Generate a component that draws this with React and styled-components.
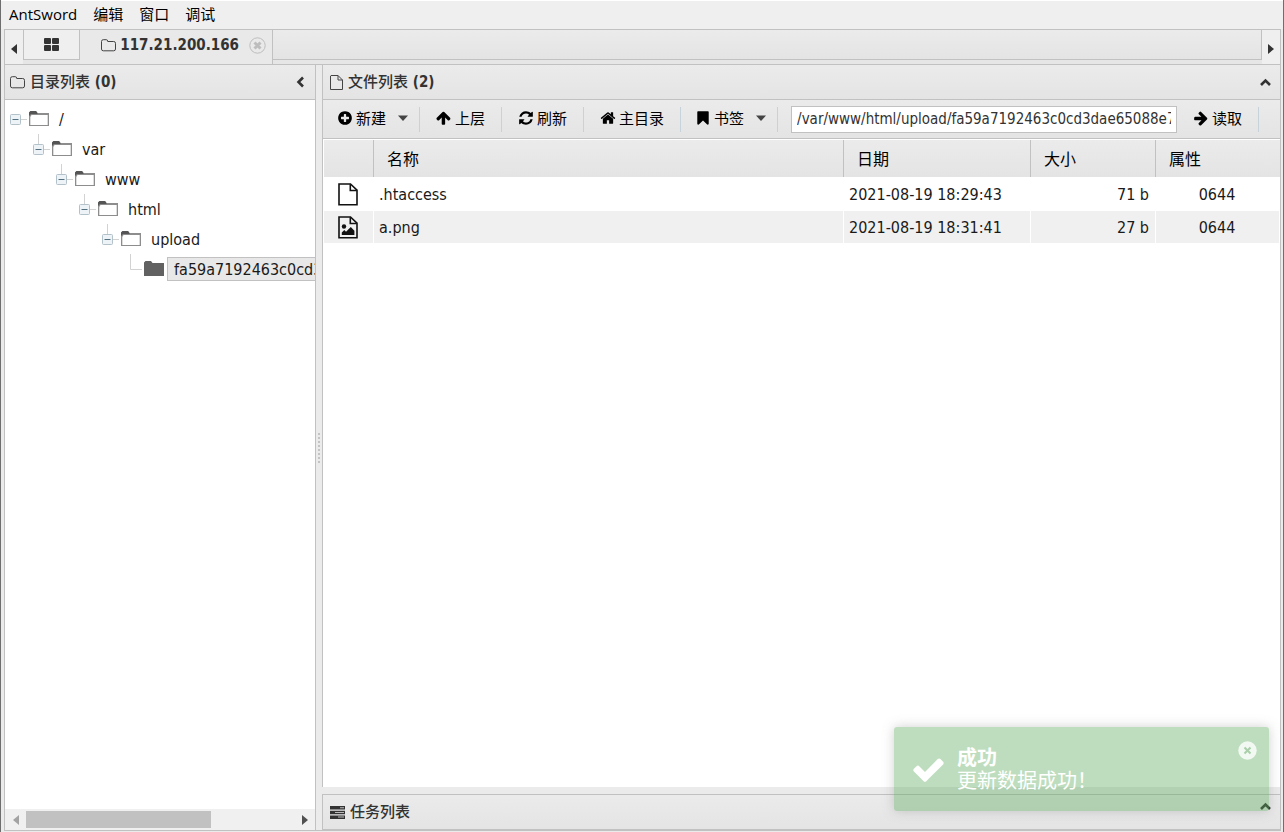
import React, { useState } from 'react'
import styled, { createGlobalStyle } from 'styled-components'

const COLOR = {
  line: '#c1c1c1',
  chrome: '#ebebeb',
  text: '#333333',
  black: '#000000',
  divider: '#c6d3da',
}
const BAR = 'linear-gradient(#ebebeb, #e4e4e4)'
const FONT = {
  ui: '"DejaVu Sans Condensed", "DejaVu Sans", "Noto Sans CJK SC", sans-serif',
  menu: '"Open Sans", "Noto Sans CJK SC", sans-serif',
  cjk: '"Noto Sans CJK SC", sans-serif',
}

const GlobalStyle = createGlobalStyle`
  * {
    box-sizing: border-box;
  }
  body {
    margin: 0;
    font-family: ${FONT.ui};
    font-size: 16px;
    color: ${COLOR.black};
  }
  button {
    font: inherit;
    color: inherit;
    background: none;
    border: 0;
    padding: 0;
  }
  svg {
    display: block;
    flex: none;
  }
`

const Window = styled.div`
  height: 100vh;
  display: flex;
  flex-direction: column;
  overflow: hidden;
  background: ${COLOR.chrome};
  border-left: 1px solid #6e6e6e;
  border-right: 1px solid #6e6e6e;
`
const MenuBar = styled.nav`
  height: 29px;
  flex: none;
  display: flex;
  align-items: center;
  gap: 16px;
  padding: 0 0 2px 8px;
  background: #efefef;
  border-top: 1px solid #ffffff;
  font-family: ${FONT.menu};
  font-size: 15px;
  line-height: 20px;
`
const Workspace = styled.div`
  flex: 1;
  min-height: 0;
  display: flex;
  flex-direction: column;
  margin: 0 2px 1px 3px;
  border: 1px solid ${COLOR.line};
`
const TabBar = styled.div`
  height: 34px;
  flex: none;
  display: flex;
  background: #e6e6e6;
`
const TabArrow = styled.button`
  width: 18px;
  display: flex;
  align-items: center;
  justify-content: center;
  padding-top: 3px;
  background: #efefef;
`
const Tab = styled.button`
  height: ${(props) => (props.$active ? '34px' : '30px')};
  width: ${(props) => (props.$active ? '193px' : '57px')};
  display: flex;
  align-items: center;
  justify-content: ${(props) => (props.$active ? 'flex-end' : 'center')};
  background: ${(props) => (props.$active ? '#e9e9e9' : '#efefef')};
  border: 1px solid ${COLOR.line};
  border-width: 0 1px ${(props) => (props.$active ? '0' : '1px')} ${(props) => (props.$active ? '0' : '1px')};
  color: ${COLOR.text};
  font-size: 15px;
  font-weight: bold;
  padding: ${(props) => (props.$active ? '0 6px 4px 0' : '0')};
`
const TabTitle = styled.span`
  margin: 0 10px 0 4px;
`
const TabSpace = styled.div`
  flex: 1;
  height: 30px;
  background: ${BAR};
  border-right: 1px solid ${COLOR.line};
  border-bottom: 1px solid ${COLOR.line};
`
const Columns = styled.div`
  flex: 1;
  min-height: 0;
  display: flex;
  border-top: 1px solid ${COLOR.line};
`
const SidePanel = styled.aside`
  width: 311px;
  flex: none;
  display: flex;
  flex-direction: column;
  background: #ffffff;
  border-right: 1px solid ${COLOR.line};
`
const Splitter = styled.div`
  width: 6px;
  flex: none;
  display: flex;
  align-items: center;
  justify-content: center;
`
const MainPanel = styled.main`
  flex: 1;
  min-width: 0;
  display: flex;
  flex-direction: column;
`
const PanelHeader = styled.header`
  height: 35px;
  flex: none;
  display: flex;
  align-items: center;
  gap: 5px;
  padding: ${(props) => (props.$side ? '0 10px 0 5px' : '0 8px 0 7px')};
  background: ${BAR};
  border-bottom: 1px solid ${COLOR.line};
  color: ${COLOR.text};
`
const PanelTitle = styled.h2`
  flex: 1;
  margin: 0;
  padding-bottom: 2px;
  font-size: 15px;
  line-height: 22px;
  font-weight: bold;
`
const Cjk = styled.span`
  font-family: ${FONT.cjk};
  font-weight: 500;
`
const CollapseButton = styled.button`
  padding-bottom: ${(props) => (props.$raised ? '12px' : '0')};
`
const Tree = styled.ul`
  flex: 1;
  min-height: 0;
  overflow: hidden;
  margin: 0;
  padding: 4px 0;
  list-style: none;
`
const TreeRow = styled.li`
  height: 30px;
  display: flex;
  align-items: center;
  padding-left: ${(props) => props.$level * 23}px;
`
const TreeLabel = styled.span`
  flex: none;
  margin-left: 3px;
  padding: 2px 6px 0;
  line-height: 20px;
  border: 1px solid ${(props) => (props.$selected ? COLOR.line : 'transparent')};
  background: ${(props) => (props.$selected ? '#e8e8e8' : 'none')};
  color: #1a1a1a;
`
const ScrollBar = styled.div`
  height: 21px;
  flex: none;
  display: flex;
  align-items: center;
  background: #f0f0f0;
`
const ScrollArrow = styled.button`
  width: 21px;
  height: 21px;
  display: flex;
  align-items: center;
  justify-content: center;
`
const ScrollTrack = styled.div`
  flex: 1;
  height: 17px;
`
const ScrollThumb = styled.div`
  width: 69%;
  height: 17px;
  background: #c1c1c1;
`
const Files = styled.section`
  flex: 1;
  min-height: 0;
  display: flex;
  flex-direction: column;
  background: #ffffff;
  border-left: 1px solid ${COLOR.line};
`
const Toolbar = styled.div`
  height: 39px;
  flex: none;
  display: flex;
  align-items: center;
  padding-right: 21px;
  background: ${BAR};
  border-bottom: 1px solid ${COLOR.line};
  font-family: ${FONT.cjk};
  font-size: 15px;
  line-height: 22px;
`
const ToolItem = styled.div`
  height: 25px;
  display: flex;
  align-items: center;
  padding: ${(props) => (props.$menu ? '0 11px 3px 14px' : '0 16px 3px')};
  border-right: 1px solid ${COLOR.divider};
`
const ToolButton = styled.button`
  display: flex;
  align-items: center;
  gap: 3px;
  white-space: nowrap;
`
const DropButton = styled.button`
  height: 22px;
  margin-left: 12px;
  display: flex;
  align-items: center;
`
const PathField = styled.input`
  flex: 1;
  min-width: 0;
  height: 27px;
  margin-left: 13px;
  padding: 0 5px;
  border: 1px solid ${COLOR.line};
  border-radius: 0;
  outline: none;
  background: #ffffff;
  color: ${COLOR.text};
  font-family: ${FONT.ui};
  font-size: 15px;
`
const FileTable = styled.table`
  width: 100%;
  table-layout: fixed;
  border-collapse: separate;
  border-spacing: 0;
  border-left: 1px solid #ffffff;
  border-top: 1px solid #ffffff;
`
const HeadCell = styled.th`
  width: ${(props) => props.$width};
  height: 37px;
  padding: 0 0 2px 13px;
  text-align: left;
  font-family: ${FONT.cjk};
  font-size: 16px;
  font-weight: normal;
  line-height: 24px;
  background: ${BAR};
  border-right: 1px solid ${COLOR.line};
  &:last-child {
    border-right: 0;
  }
`
const FileRow = styled.tr`
  height: 33px;
  &:nth-child(even) td {
    background: #f0f0f0;
  }
`
const Cell = styled.td`
  padding: ${(props) => (props.$icon ? '0 0 0 14px' : '0 6px 0 5px')};
  text-align: ${(props) => props.$align || 'left'};
  color: #1a1a1a;
  white-space: nowrap;
  border-right: 1px solid #ffffff;
  border-top: 1px solid #ffffff;
`
const TaskHeader = styled(PanelHeader)`
  height: 36px;
  margin-top: 7px;
  border: 1px solid ${COLOR.line};
  border-right: 0;
`
const Toast = styled.div`
  position: absolute;
  right: 15px;
  bottom: 21px;
  width: 375px;
  height: 84px;
  display: flex;
  align-items: center;
  padding: 0 12px 0 17px;
  gap: 11px;
  border-radius: 3px;
  background: rgba(92, 170, 92, 0.4);
  box-shadow: 0 0 12px rgba(120, 120, 120, 0.35);
  color: #ffffff;
  font-family: ${FONT.cjk};
  font-size: 20px;
  line-height: 23px;
`
const ToastText = styled.div`
  flex: 1;
  padding-bottom: 2px;
`
const ToastTitle = styled.strong`
  display: block;
  font-weight: bold;
`
const ToastClose = styled.button`
  align-self: flex-start;
  margin-top: 14px;
`

const glyphs = {
  plus: 'M1344 960v-128q0-26-19-45t-45-19h-256v-256q0-26-19-45t-45-19h-128q-26 0-45 19t-19 45v256h-256q-26 0-45 19t-19 45v128q0 26 19 45t45 19h256v256q0 26 19 45t45 19h128q26 0 45-19t19-45v-256h256q26 0 45-19t19-45zm320-64q0 209-103 385.500t-279.500 279.500-385.500 103-385.500-103-279.500-279.500-103-385.500 103-385.500 279.500-279.500 385.500-103 385.500 103 279.500 279.500 103 385.500z',
  up: 'M1611 971q0 51-37 90l-75 75q-38 38-91 38-54 0-90-38l-294-293v704q0 52-37.500 84.500t-90.500 32.500h-128q-53 0-90.500-32.500t-37.500-84.500v-704l-294 293q-36 38-90 38t-90-38l-75-75q-38-38-38-90 0-53 38-91l651-651q35-37 90-37 54 0 91 37l651 651q37 39 37 91z',
  right: 'M1600 960q0 54-37 91l-651 651q-39 37-91 37-51 0-90-37l-75-75q-38-38-38-91t38-91l293-293h-704q-52 0-84.500-37.500t-32.500-90.500v-128q0-53 32.500-90.500t84.500-37.500h704l-293-294q-38-36-38-90t38-90l75-75q38-38 90-38 53 0 91 38l651 651q37 35 37 90z',
  home: 'M1472 992v480q0 26-19 45t-45 19h-384v-384h-256v384h-384q-26 0-45-19t-19-45v-480q0-1 .5-3t.5-3l575-474 575 474q1 2 1 6zm223-69l-62 74q-8 9-21 11h-3q-13 0-21-7l-692-577-692 577q-12 8-24 7-13-2-21-11l-62-74q-8-10-7-23.500t11-21.500l719-599q32-26 76-26t76 26l244 204v-195q0-14 9-23t23-9h192q14 0 23 9t9 23v408l219 182q10 8 11 21.500t-7 23.500z',
  bookmark: 'M1420 128q23 0 44 9 33 13 52.500 41t19.500 62v1289q0 34-19.500 62t-52.500 41q-19 8-44 8-48 0-83-32l-441-424-441 424q-36 33-83 33-23 0-44-9-33-13-52.500-41t-19.500-62v-1289q0-34 19.500-62t52.500-41q21-9 44-9h1048z',
  refresh: 'M1639 1056q0 5-1 7-64 268-268 434.500t-478 166.500q-146 0-282.500-55t-243.500-157l-129 129q-19 19-45 19t-45-19-19-45v-448q0-26 19-45t45-19h448q26 0 45 19t19 45-19 45l-137 137q71 66 161 102t187 36q134 0 250-65t186-179q11-17 53-117 8-23 30-23h192q13 0 22.500 9.500t9.500 22.500zm25-800v448q0 26-19 45t-45 19h-448q-26 0-45-19t-19-45 19-45l138-138q-148-137-349-137-134 0-250 65t-186 179q-11 17-53 117-8 23-30 23h-199q-13 0-22.500-9.500t-9.500-22.500v-7q65-268 270-434.500t480-166.500q146 0 284 55.500t245 156.500l130-129q19-19 45-19t45 19 19 45z',
  check: 'M1671 566q0 40-28 68l-724 724-136 136q-28 28-68 28t-68-28l-136-136-362-362q-28-28-28-68t28-68l136-136q28-28 68-28t68 28l294 295 656-657q28-28 68-28t68 28l136 136q28 28 28 68z',
}
const Glyph = ({ name, size = 16 }) => (
  <svg width={size} height={size} viewBox='0 0 1792 1792' fill='currentColor'>
    <path d={glyphs[name]} />
  </svg>
)
const FolderOutline = () => (
  <svg width='15' height='13' viewBox='0 0 15 13' fill='none' stroke='#444'>
    <path d='M.5 10V2.500a1.800 1.800 0 0 1 1.800-1.800h2.900a1.500 1.500 0 0 1 1.500 1.500v.3h6a1.800 1.800 0 0 1 1.800 1.800V10a1.800 1.800 0 0 1-1.800 1.800H2.300A1.800 1.800 0 0 1 .5 10z' />
  </svg>
)
const PageOutline = () => (
  <svg width='13' height='15' viewBox='0 0 13 15' fill='none' stroke='#444'>
    <path d='M1 .5h7l4.500 4.500v9.500H.5V1zM8 .5V5h4.500' />
  </svg>
)
const FileIcon = ({ image }) => (
  <svg width='20' height='23' viewBox='0 0 20 23' fill='none' stroke='#111' strokeWidth='1.600'>
    <path d='M1 1H12.500L19 7.200V21.800H1z' />
    <path d='M12.300 1.300V7.500h6.400' />
    {image && (
      <g fill='#111' stroke='none'>
        <circle cx='6' cy='10.500' r='2.200' />
        <path d='M3.800 19v-2.400l2.500-2.500 1.700 1.700 4.800-4.800 3.600 3.800V19z' />
      </g>
    )}
  </svg>
)
const Chevron = ({ left }) => (
  <svg width={left ? 9 : 13} height={left ? 12 : 9} viewBox={left ? '0 0 9 12' : '0 0 13 9'} fill='none' stroke='#333' strokeWidth='2.600'>
    <path d={left ? 'M7 1.500L2.500 6 7 10.500' : 'M2 7l4.500-4.500L11 7'} />
  </svg>
)
const Caret = () => (
  <svg width='10' height='6' viewBox='0 0 10 6' fill='#444'>
    <path d='M0 .5h10L5 6z' />
  </svg>
)
const Triangle = ({ right, color = '#333' }) => (
  <svg width='6' height='10' viewBox='0 0 6 10' fill={color}>
    <path d={right ? 'M0 0l6 5-6 5z' : 'M6 0L0 5l6 5z'} />
  </svg>
)
const GridIcon = () => (
  <svg width='15' height='13' viewBox='0 0 15 13' fill='#333'>
    <rect width='7' height='6' rx='1' />
    <rect x='8' width='7' height='6' rx='1' />
    <rect y='7' width='7' height='6' rx='1' />
    <rect x='8' y='7' width='7' height='6' rx='1' />
  </svg>
)
const TabClose = () => (
  <svg width='17' height='17' viewBox='0 0 17 17' fill='none' stroke='#bdbdbd'>
    <circle cx='8.500' cy='8.500' r='7.700' />
    <path d='M5.500 5.500l6 6M11.500 5.500l-6 6' strokeWidth='3' />
  </svg>
)
const TasksIcon = () => (
  <svg width='15' height='13' viewBox='0 0 15 13'>
    <path d='M0 0h15v3.500H0zM0 4.700h15v3.500H0zM0 9.400h15v3.500H0z' fill='#333' />
    <path d='M10 1.200h4v1h-4zM5 5.900h9v1H5zM8 10.600h6v1H8z' fill='#bbb' />
  </svg>
)
const Branch = ({ root, leaf }) => (
  <svg width='24' height='30' viewBox='0 0 24 30' fill='none' stroke='#d2d2d2'>
    {leaf ? (
      <path d='M10.500 0v15.500H22' />
    ) : (
      <>
        <path d={root ? 'M16 15.500h6' : 'M10.500 0v10M16 15.500h6'} />
        <rect x='5.500' y='10.500' width='10' height='10' rx='1' fill='#edf3f6' stroke='#b3c1c9' />
        <path d='M7.500 15.500h6' stroke='#52707f' />
      </>
    )}
  </svg>
)
const TreeFolder = ({ full }) => (
  <svg width='20' height='16' viewBox='0 0 20 16'>
    <path d='M0 15V1.500L1.500 0H7l1.500 2H20v13z' fill={full ? '#616161' : '#8d8d8d'} />
    {!full && <path d='M1.300 14V6L2.500 4h16.200v10z' fill='#fff' />}
    {!full && <path d='M0 5V1.500L1.500 0H7l1.500 2v1H2z' fill='#555' />}
  </svg>
)
const Grip = () => (
  <svg width='2' height='30' viewBox='0 0 2 30' fill='#c4c4c4'>
    {[0, 4, 8, 12, 16, 20, 24, 28].map((y) => (
      <rect key={y} y={y} width='2' height='2' />
    ))}
  </svg>
)
const ToastCross = () => (
  <svg width='19' height='19' viewBox='0 0 19 19'>
    <circle cx='9.500' cy='9.500' r='9.200' fill='#fff' fillOpacity='.8' />
    <path d='M6.500 6.500l6 6M12.500 6.500l-6 6' stroke='#a9d0a9' strokeWidth='2' />
  </svg>
)

const menus = ['AntSword', '编辑', '窗口', '调试']
const folders = ['/', 'var', 'www', 'html', 'upload', 'fa59a7192463c0cd3dae65088e76']
const tools = [
  { label: '新建', icon: 'plus', menu: true },
  { label: '上层', icon: 'up' },
  { label: '刷新', icon: 'refresh' },
  { label: '主目录', icon: 'home' },
  { label: '书签', icon: 'bookmark', menu: true },
]
const files = [
  { name: '.htaccess', date: '2021-08-19 18:29:43', size: '71 b', attr: '0644' },
  { name: 'a.png', date: '2021-08-19 18:31:41', size: '27 b', attr: '0644', image: true },
]

const App = () => {
  const [path, setPath] = useState('/var/www/html/upload/fa59a7192463c0cd3dae65088e76')
  const [showToast, setShowToast] = useState(true)

  return (
    <Window>
      <GlobalStyle />
      <MenuBar>
        {menus.map((menu) => (
          <button key={menu}>{menu}</button>
        ))}
      </MenuBar>
      <Workspace>
        <TabBar>
          <TabArrow aria-label='left'>
            <Triangle />
          </TabArrow>
          <Tab aria-label='home'>
            <GridIcon />
          </Tab>
          <Tab $active>
            <FolderOutline />
            <TabTitle>117.21.200.166</TabTitle>
            <TabClose />
          </Tab>
          <TabSpace />
          <TabArrow aria-label='right'>
            <Triangle right />
          </TabArrow>
        </TabBar>
        <Columns>
          <SidePanel>
            <PanelHeader $side>
              <FolderOutline />
              <PanelTitle>
                <Cjk>目录列表</Cjk> (0)
              </PanelTitle>
              <CollapseButton aria-label='collapse'>
                <Chevron left />
              </CollapseButton>
            </PanelHeader>
            <Tree>
              {folders.map((name, level) => {
                const leaf = level === folders.length - 1
                return (
                  <TreeRow key={name} $level={level}>
                    <Branch root={level === 0} leaf={leaf} />
                    <TreeFolder full={leaf} />
                    <TreeLabel $selected={leaf}>{name}</TreeLabel>
                  </TreeRow>
                )
              })}
            </Tree>
            <ScrollBar>
              <ScrollArrow aria-label='scroll left'>
                <Triangle color='#a3a3a3' />
              </ScrollArrow>
              <ScrollTrack>
                <ScrollThumb />
              </ScrollTrack>
              <ScrollArrow aria-label='scroll right'>
                <Triangle right color='#505050' />
              </ScrollArrow>
            </ScrollBar>
          </SidePanel>
          <Splitter>
            <Grip />
          </Splitter>
          <MainPanel>
            <Files>
              <PanelHeader>
                <PageOutline />
                <PanelTitle>
                  <Cjk>文件列表</Cjk> (2)
                </PanelTitle>
                <CollapseButton aria-label='collapse'>
                  <Chevron />
                </CollapseButton>
              </PanelHeader>
              <Toolbar>
                {tools.map((tool) => (
                  <ToolItem key={tool.label} $menu={tool.menu}>
                    <ToolButton>
                      <Glyph name={tool.icon} />
                      {tool.label}
                    </ToolButton>
                    {tool.menu && (
                      <DropButton aria-label={tool.label}>
                        <Caret />
                      </DropButton>
                    )}
                  </ToolItem>
                ))}
                <PathField aria-label='path' value={path} onChange={(e) => setPath(e.target.value)} />
                <ToolItem>
                  <ToolButton>
                    <Glyph name='right' />
                    读取
                  </ToolButton>
                </ToolItem>
              </Toolbar>
              <FileTable>
                <thead>
                  <tr>
                    <HeadCell $width='50px' />
                    <HeadCell>名称</HeadCell>
                    <HeadCell $width='187px'>日期</HeadCell>
                    <HeadCell $width='125px'>大小</HeadCell>
                    <HeadCell $width='124px'>属性</HeadCell>
                  </tr>
                </thead>
                <tbody>
                  {files.map((file) => (
                    <FileRow key={file.name}>
                      <Cell $icon>
                        <FileIcon image={file.image} />
                      </Cell>
                      <Cell>{file.name}</Cell>
                      <Cell>{file.date}</Cell>
                      <Cell $align='right'>{file.size}</Cell>
                      <Cell $align='center'>{file.attr}</Cell>
                    </FileRow>
                  ))}
                </tbody>
              </FileTable>
            </Files>
            <TaskHeader>
              <TasksIcon />
              <PanelTitle>
                <Cjk>任务列表</Cjk>
              </PanelTitle>
              <CollapseButton $raised aria-label='expand'>
                <Chevron />
              </CollapseButton>
            </TaskHeader>
          </MainPanel>
        </Columns>
      </Workspace>
      {showToast && (
        <Toast role='status'>
          <Glyph name='check' size={35} />
          <ToastText>
            <ToastTitle>成功</ToastTitle>
            更新数据成功！
          </ToastText>
          <ToastClose aria-label='close' onClick={() => setShowToast(false)}>
            <ToastCross />
          </ToastClose>
        </Toast>
      )}
    </Window>
  )
}

export default App
